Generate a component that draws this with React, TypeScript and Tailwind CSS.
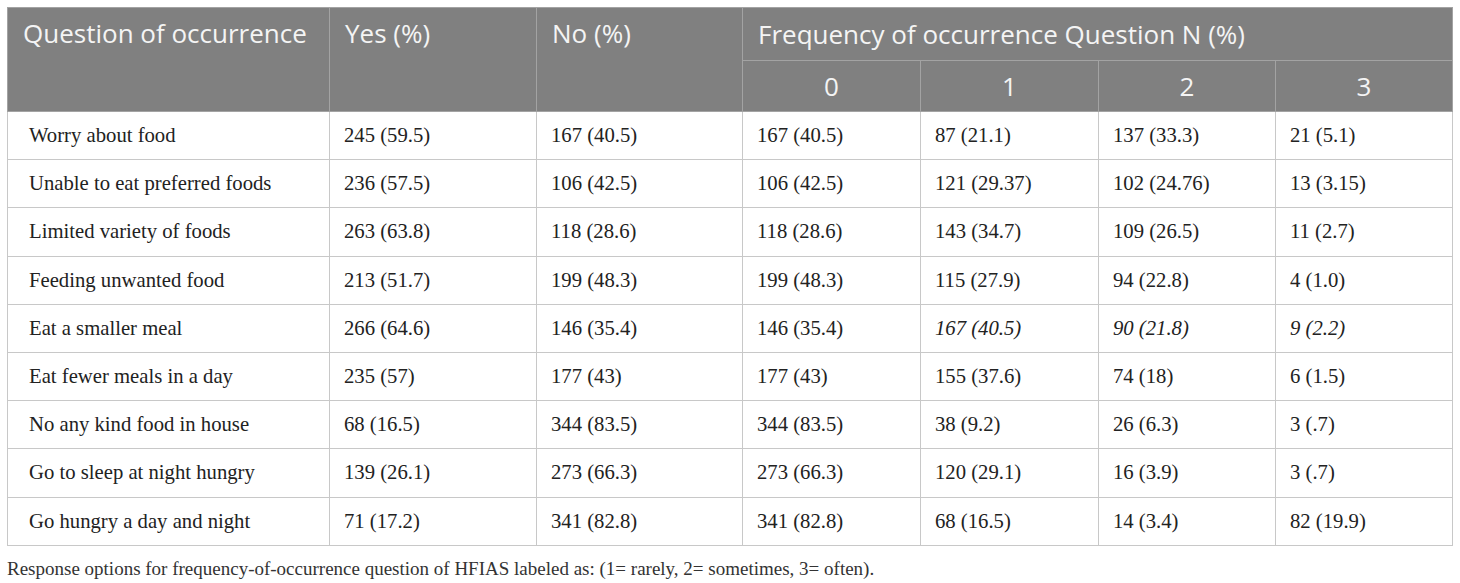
const rows: { q: string; vals: string[]; italic?: boolean }[] = [
  { q: 'Worry about food', vals: ['245 (59.5)', '167 (40.5)', '167 (40.5)', '87 (21.1)', '137 (33.3)', '21 (5.1)'] },
  { q: 'Unable to eat preferred foods', vals: ['236 (57.5)', '106 (42.5)', '106 (42.5)', '121 (29.37)', '102 (24.76)', '13 (3.15)'] },
  { q: 'Limited variety of foods', vals: ['263 (63.8)', '118 (28.6)', '118 (28.6)', '143 (34.7)', '109 (26.5)', '11 (2.7)'] },
  { q: 'Feeding unwanted food', vals: ['213 (51.7)', '199 (48.3)', '199 (48.3)', '115 (27.9)', '94 (22.8)', '4 (1.0)'] },
  { q: 'Eat a smaller meal', vals: ['266 (64.6)', '146 (35.4)', '146 (35.4)', '167 (40.5)', '90 (21.8)', '9 (2.2)'], italic: true },
  { q: 'Eat fewer meals in a day', vals: ['235 (57)', '177 (43)', '177 (43)', '155 (37.6)', '74 (18)', '6 (1.5)'] },
  { q: 'No any kind food in house', vals: ['68 (16.5)', '344 (83.5)', '344 (83.5)', '38 (9.2)', '26 (6.3)', '3 (.7)'] },
  { q: 'Go to sleep at night hungry', vals: ['139 (26.1)', '273 (66.3)', '273 (66.3)', '120 (29.1)', '16 (3.9)', '3 (.7)'] },
  { q: 'Go hungry a day and night', vals: ['71 (17.2)', '341 (82.8)', '341 (82.8)', '68 (16.5)', '14 (3.4)', '82 (19.9)'] },
];

const head = "font-['Open_Sans',sans-serif] text-[26px] leading-[30px] font-normal text-[#f4f4f4] bg-[#808080] border border-[#a3a3a3] px-[15px]";

export default function App() {
  return (
    <div className="bg-white w-[1460px] h-[583px] pt-[7px] px-[7px]">
      <table className="border-collapse table-fixed w-[1445px] border border-[#c4c4c4]">
        <colgroup>
          <col className="w-[322px]" />
          <col className="w-[207px]" />
          <col className="w-[206px]" />
          <col className="w-[178px]" />
          <col className="w-[178px]" />
          <col className="w-[177px]" />
          <col className="w-[177px]" />
        </colgroup>
        <thead>
          <tr className="h-[53px]">
            <th rowSpan={2} className={`${head} text-left align-top pt-[10px]`}>Question of occurrence</th>
            <th rowSpan={2} className={`${head} text-left align-top pt-[10px]`}>Yes (%)</th>
            <th rowSpan={2} className={`${head} text-left align-top pt-[10px]`}>No (%)</th>
            <th colSpan={4} className={`${head} text-left align-middle`}>Frequency of occurrence Question N (%)</th>
          </tr>
          <tr className="h-[51px]">
            {['0', '1', '2', '3'].map((n) => (
              <th key={n} className={`${head} text-center align-middle`}>{n}</th>
            ))}
          </tr>
        </thead>
        <tbody className="font-['Liberation_Serif',serif] text-[20.7px] text-[#222]">
          {rows.map((r) => (
            <tr key={r.q} className="h-[48.2px]">
              <td className="border border-[#c8c8c8] pl-[21px] pr-2 align-middle">{r.q}</td>
              {r.vals.map((v, i) => (
                <td
                  key={i}
                  className={`border border-[#c8c8c8] px-[14px] align-middle ${r.italic && i >= 3 ? 'italic' : ''}`}
                >
                  {v}
                </td>
              ))}
            </tr>
          ))}
        </tbody>
      </table>
      <p className="mt-[9px] font-['Liberation_Serif',serif] text-[19px] text-[#333]">
        Response options for frequency-of-occurrence question of HFIAS labeled as: (1= rarely, 2= sometimes, 3= often).
      </p>
    </div>
  );
}
